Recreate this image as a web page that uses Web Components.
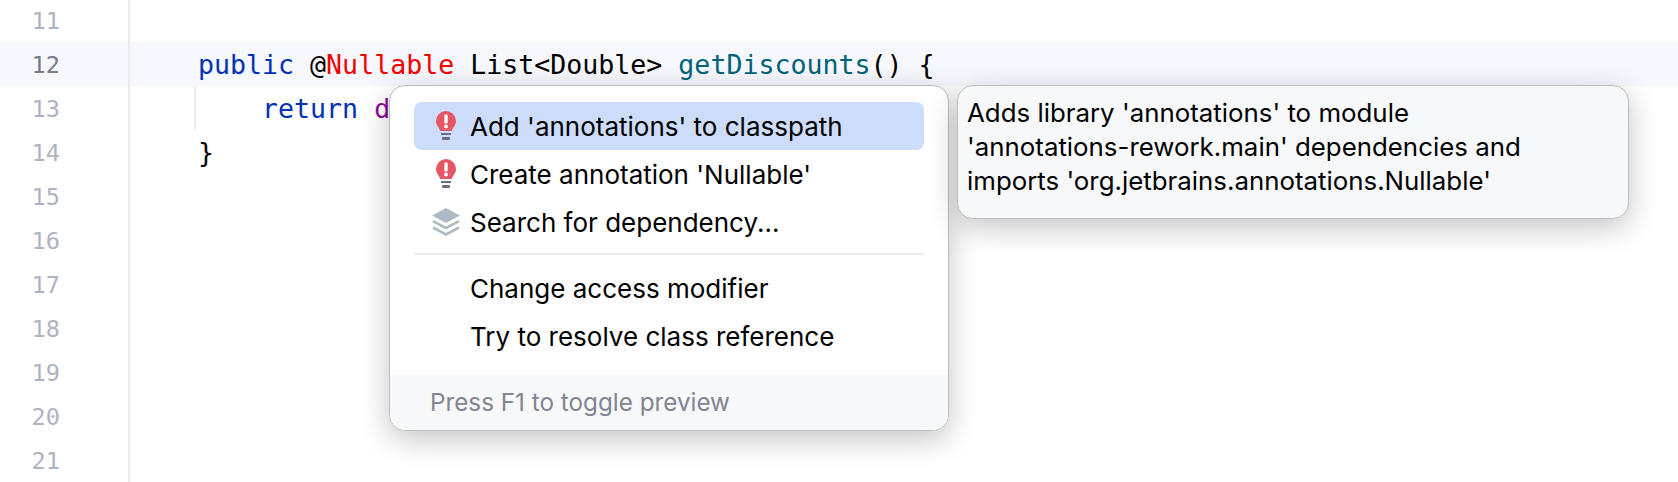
<!DOCTYPE html>
<html>
<head>
<meta charset="utf-8">
<title>Intention actions</title>
<style>
  html, body { margin: 0; background: #fff; }
  body { width: 1678px; height: 482px; overflow: hidden; }
</style>
</head>
<body>
<ide-editor>
  <code-line num="11"></code-line>
  <code-line num="12" current><span class="kw">public</span> @<span class="err">Nullable</span> List&lt;Double&gt; <span class="fn">getDiscounts</span>() {</code-line>
  <code-line num="13" guide>    <span class="kw">return</span> <span class="field">d</span></code-line>
  <code-line num="14">}</code-line>
  <code-line num="15"></code-line>
  <code-line num="16"></code-line>
  <code-line num="17"></code-line>
  <code-line num="18"></code-line>
  <code-line num="19"></code-line>
  <code-line num="20"></code-line>
  <code-line num="21"></code-line>

  <intention-popup slot="overlay" hint="Press F1 to toggle preview">
    <intention-item icon="bulb" selected>Add 'annotations' to classpath</intention-item>
    <intention-item icon="bulb">Create annotation 'Nullable'</intention-item>
    <intention-item icon="layers">Search for dependency...</intention-item>
    <menu-separator></menu-separator>
    <intention-item>Change access modifier</intention-item>
    <intention-item>Try to resolve class reference</intention-item>
  </intention-popup>

  <doc-tooltip slot="overlay">Adds library 'annotations' to module<br>'annotations-rework.main' dependencies and<br>imports 'org.jetbrains.annotations.Nullable'</doc-tooltip>
</ide-editor>

<script>
const ICONS = {
  bulb: `<svg width="28" height="30" viewBox="0 0 28 30">
      <path fill="#e55765" d="M14 0a10 10 0 0 1 10 10c0 4.2-3.2 6.2-4.2 10H8.200C7.200 16.200 4 14.200 4 10A10 10 0 0 1 14 0z"/>
      <rect x="12.300" y="3.500" width="3.400" height="9" rx="1.200" fill="#fff"/>
      <circle cx="14" cy="15.500" r="1.900" fill="#fff"/>
      <rect x="9" y="22" width="10" height="2" fill="#6c707e"/>
      <rect x="10" y="26" width="8" height="3" rx="1" fill="#6c707e"/>
    </svg>`,
  layers: `<svg width="28" height="28" viewBox="0 0 28 28">
      <path fill="#afbbc4" d="M14 0 28 7.500 14 15 0 7.500z"/>
      <path fill="none" stroke="#afbbc4" stroke-width="2.600" d="M1 13.200 14 20 27 13.200M1 19.500 14 26.500 27 19.500"/>
    </svg>`
};

class IdeEditor extends HTMLElement {
  constructor() {
    super();
    this.attachShadow({ mode: 'open' });
    this.shadowRoot.innerHTML = `
      <style>
        :host { display: block; position: relative; width: 1678px; height: 482px; overflow: hidden; background: #fff; }
        .lines { display: flex; flex-direction: column; margin-top: -2px; }
      </style>
      <div class="lines"><slot></slot></div>
      <slot name="overlay"></slot>
    `;
  }
}

class CodeLine extends HTMLElement {
  constructor() {
    super();
    this.attachShadow({ mode: 'open' });
  }

  connectedCallback() {
    this.shadowRoot.innerHTML = `
      <style>
        :host { display: flex; height: 44px; font-family: "DejaVu Sans Mono", monospace; }
        :host([current]) { background: #f6f8fd; }
        .num {
          width: 60px; padding-right: 68px; text-align: right; flex: none; line-height: 47px;
          font-size: 23.600px; color: #aeb3c2; border-right: 2px solid #ebecf0;
        }
        :host([current]) .num { color: #767a8a; }
        .code {
          position: relative; flex: 1; padding-left: 68px; white-space: pre; line-height: 46px;
          font-size: 26.600px; color: #000;
        }
        :host([guide]) .code::before {
          content: ""; position: absolute; left: 64px; top: 0; bottom: 0; width: 2px; background: #ebecf0;
        }
        ::slotted(.kw) { color: #0033b3; }
        ::slotted(.err) { color: #f50000; }
        ::slotted(.fn) { color: #00627a; }
        ::slotted(.field) { color: #871094; }
      </style>
      <div class="num">${this.getAttribute('num')}</div>
      <div class="code"><slot></slot></div>
    `;
  }
}

class IntentionPopup extends HTMLElement {
  constructor() {
    super();
    this.attachShadow({ mode: 'open' });
  }

  connectedCallback() {
    this.shadowRoot.innerHTML = `
      <style>
        :host {
          position: absolute; left: 389px; top: 85px; width: 560px; height: 346px; box-sizing: border-box;
          display: flex; flex-direction: column; overflow: hidden;
          background: #fff; border: 1px solid #bcbec4; border-radius: 16px;
          box-shadow: 0 8px 30px rgba(0, 0, 0, .24);
          font-family: Inter, sans-serif;
        }
        .list { flex: 1; padding: 16px 24px 0; }
        .hint {
          height: 55px; line-height: 55px; padding-left: 40px; flex: none;
          background: #f7f8fa; color: #818594; font-size: 24.250px;
        }
      </style>
      <div class="list"><slot></slot></div>
      <div class="hint">${this.getAttribute('hint')}</div>
    `;
  }
}

class IntentionItem extends HTMLElement {
  constructor() {
    super();
    this.attachShadow({ mode: 'open' });
  }

  connectedCallback() {
    const icon = ICONS[this.getAttribute('icon')] || '';
    this.shadowRoot.innerHTML = `
      <style>
        :host {
          display: flex; align-items: center; height: 48px; padding-left: 18px; box-sizing: border-box;
          border-radius: 8px; font-size: 26px; color: #000; white-space: nowrap;
        }
        :host([selected]) { background: #cddcfa; }
        .icon { width: 28px; height: 30px; margin-right: 10px; display: flex; align-items: center; flex: none; }
      </style>
      <span class="icon">${icon}</span><slot></slot>
    `;
  }
}

class MenuSeparator extends HTMLElement {
  constructor() {
    super();
    this.attachShadow({ mode: 'open' });
    this.shadowRoot.innerHTML = `
      <style>
        :host { display: block; height: 2px; margin: 7px 0 9px; background: #ebecf0; }
      </style>
    `;
  }
}

class DocTooltip extends HTMLElement {
  constructor() {
    super();
    this.attachShadow({ mode: 'open' });
    this.shadowRoot.innerHTML = `
      <style>
        :host {
          position: absolute; left: 957px; top: 85px; width: 672px; height: 134px; box-sizing: border-box;
          display: block; padding: 10px 9px;
          background: #f7f8fa; border: 1px solid #bcbec4; border-radius: 16px;
          box-shadow: 0 8px 30px rgba(0, 0, 0, .24);
          font-family: Inter, sans-serif; font-size: 25.850px; line-height: 34px; color: #000; white-space: nowrap;
        }
      </style>
      <slot></slot>
    `;
  }
}

customElements.define('ide-editor', IdeEditor);
customElements.define('code-line', CodeLine);
customElements.define('intention-popup', IntentionPopup);
customElements.define('intention-item', IntentionItem);
customElements.define('menu-separator', MenuSeparator);
customElements.define('doc-tooltip', DocTooltip);
</script>
</body>
</html>
